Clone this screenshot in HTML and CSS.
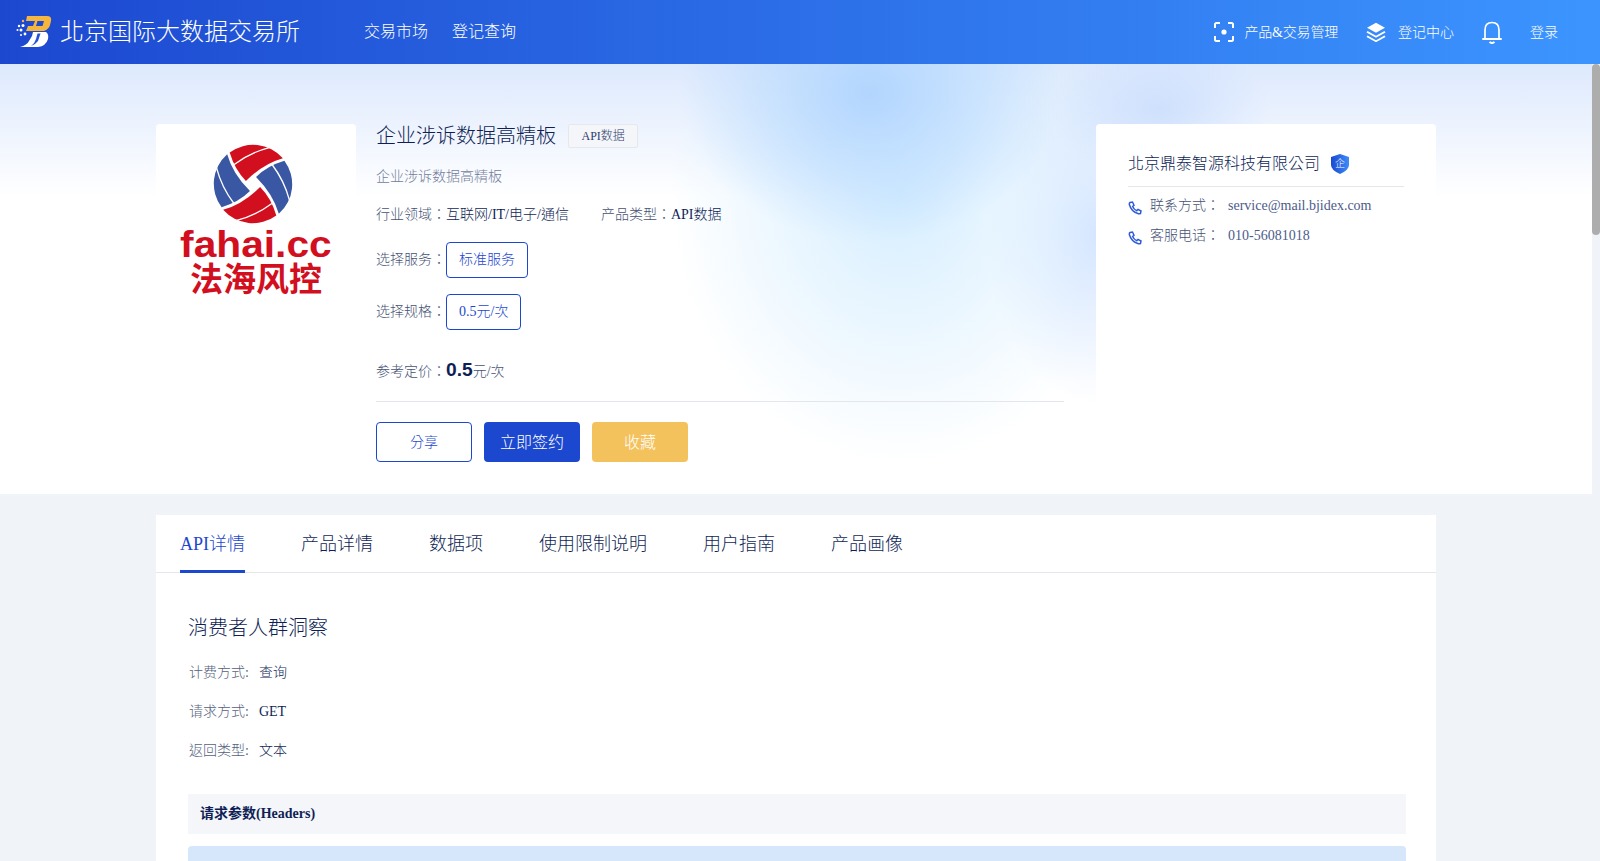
FILE: index.html
```html
<!DOCTYPE html>
<html>
<head>
<meta charset="utf-8">
<title>企业涉诉数据高精板</title>
<link rel="stylesheet" href="styles.css">
</head>
<body>
<header class="topbar">
  <div class="brand">
    <svg class="brand-logo" viewBox="0 0 36 32" width="36" height="32">
      <path fill="#f4b63f" fill-rule="evenodd" d="M11 0H31Q36 0 35 5L34 9Q33 13 28 15H10L12 10H17L19 5H10ZM21.500 5 20 10H26.500L28 5Z"/>
      <path fill="#fff" d="M17 16H30Q33 18 32 23Q30 30 22 31H4Q11 29 13 25L16 20Z"/>
      <path fill="#2352da" d="M21.500 17.500H24.500L22 25Q20 28 15 30Q19 27 20 23Z"/>
      <g fill="#f4b63f"><circle cx="7" cy="5" r="1.200"/></g>
      <g fill="#fff"><circle cx="3" cy="10" r="1.200"/><circle cx="7" cy="9.500" r="1.500"/><circle cx="1.500" cy="14" r="1"/><circle cx="5" cy="14" r="1.500"/><circle cx="9" cy="18" r="1.400"/><circle cx="5" cy="19" r="1"/></g>
    </svg>
    <span class="brand-name">北京国际大数据交易所</span>
  </div>
  <nav class="main-nav">
    <a class="nav-link">交易市场</a>
    <a class="nav-link">登记查询</a>
  </nav>
  <div class="top-actions">
    <a class="top-item item-manage">
      <svg viewBox="0 0 20 20" width="20" height="20" fill="none" stroke="#fff" stroke-width="2"><path d="M1 6V2.500Q1 1 2.500 1H6M14 1H17.500Q19 1 19 2.500V6M19 14V17.500Q19 19 17.500 19H14M6 19H2.500Q1 19 1 17.500V14"/><circle cx="10" cy="10" r="2.600" fill="#fff" stroke="none"/></svg>
      <span class="manage-text">产品&amp;交易管理</span>
    </a>
    <a class="top-item item-reg">
      <svg viewBox="0 0 20 20" width="20" height="20" fill="#fff"><path d="M10 .8 19 5.800 10 10.800 1 5.800Z"/><path d="M1.500 9 10 13.700 18.500 9 19.500 10.500 10 15.800 .5 10.500Z"/><path d="M1.500 13.500 10 18.200 18.500 13.500 19.500 15 10 20.200 .5 15Z"/></svg>
      <span class="top-text">登记中心</span>
    </a>
    <svg class="bell" viewBox="0 0 20 23" width="20" height="23" fill="none" stroke="#fff" stroke-width="1.700"><path d="M3 17.500V9Q3 1.500 10 1.500T17 9V17.500"/><path d="M1 18H19" stroke-linecap="round" stroke-width="2"/><path d="M7.500 21Q10 23 12.500 21" stroke-width="2"/></svg>
    <a class="login">登录</a>
  </div>
</header>

<main class="scroller">
  <div class="page">
    <section class="hero">
      <div class="hero-inner">
        <div class="cover">
          <svg class="ball" viewBox="-39.500 -39.500 79 79" width="80" height="80">
            <defs>
              <path id="blade" d="M-23,-31A39,39 0 0 1 29.500,-25.500Q10,-20 -7,-3Q-18,-14 -23,-31Z"/>
              <path id="seam" d="M-19,-19Q-3,-31 16,-36" fill="none" stroke="#fff" stroke-width="1.300"/>
            </defs>
            <use href="#blade" fill="#d20f1e"/><use href="#seam"/>
            <g transform="rotate(90)"><use href="#blade" fill="#3a57a4"/><use href="#seam"/></g>
            <g transform="rotate(180)"><use href="#blade" fill="#d20f1e"/><use href="#seam"/></g>
            <g transform="rotate(270)"><use href="#blade" fill="#3a57a4"/><use href="#seam"/></g>
          </svg>
          <div class="cover-en">fahai.cc</div>
          <div class="cover-cn">法海风控</div>
        </div>

        <div class="info">
          <div class="title-row">
            <h1 class="title">企业涉诉数据高精板</h1>
            <span class="tag">API数据</span>
          </div>
          <p class="desc">企业涉诉数据高精板</p>
          <div class="meta">
            <span class="meta-item"><span class="label">行业领域：</span><span class="value">互联网/IT/电子/通信</span></span>
            <span class="meta-item"><span class="label">产品类型：</span><span class="value">API数据</span></span>
          </div>
          <div class="choice"><span class="label">选择服务：</span><span class="chip">标准服务</span></div>
          <div class="choice"><span class="label">选择规格：</span><span class="chip">0.5元/次</span></div>
          <div class="price"><span class="label">参考定价：</span><strong class="amount">0.5</strong><span class="label">元/次</span></div>
          <div class="actions">
            <button class="btn btn-line">分享</button>
            <button class="btn btn-primary">立即签约</button>
            <button class="btn btn-gold">收藏</button>
          </div>
        </div>

        <aside class="seller">
          <div class="seller-head">
            <span class="seller-name">北京鼎泰智源科技有限公司</span>
            <span class="shield">
              <svg viewBox="0 0 18 20" width="18" height="20"><defs><linearGradient id="sg" x1="0" y1="0" x2="1" y2="0"><stop offset="0" stop-color="#1c48d0"/><stop offset="1" stop-color="#3c8cf8"/></linearGradient></defs><path fill="url(#sg)" d="M9 0 18 3V11Q18 16 9 20 0 16 0 11V3Z"/></svg>
              <span class="shield-text">企</span>
            </span>
          </div>
          <div class="contact">
            <svg viewBox="0 0 14 14" width="14" height="14" fill="none" stroke="#2f5bd8" stroke-width="1.500"><path d="M2 1.500 4.500 1 6 4.200 4.600 5.500Q5.800 8.400 8.800 9.700L10 8.400 13 10 12.500 12.400Q12 13 10.500 12.800 3.500 11 1.300 3.500 1.200 2 2 1.500Z"/></svg>
            <span class="contact-label">联系方式：</span><span class="contact-value">service@mail.bjidex.com</span>
          </div>
          <div class="contact">
            <svg viewBox="0 0 14 14" width="14" height="14" fill="none" stroke="#2f5bd8" stroke-width="1.500"><path d="M2 1.500 4.500 1 6 4.200 4.600 5.500Q5.800 8.400 8.800 9.700L10 8.400 13 10 12.500 12.400Q12 13 10.500 12.800 3.500 11 1.300 3.500 1.200 2 2 1.500Z"/></svg>
            <span class="contact-label">客服电话：</span><span class="contact-value">010-56081018</span>
          </div>
        </aside>
      </div>
    </section>

    <section class="detail">
      <div class="tabs">
        <a class="tab tab-active">API详情</a>
        <a class="tab">产品详情</a>
        <a class="tab">数据项</a>
        <a class="tab">使用限制说明</a>
        <a class="tab">用户指南</a>
        <a class="tab">产品画像</a>
      </div>
      <div class="detail-body">
        <h2 class="api-name">消费者人群洞察</h2>
        <div class="api-row"><span class="api-label">计费方式:</span><span class="api-value">查询</span></div>
        <div class="api-row"><span class="api-label">请求方式:</span><span class="api-value">GET</span></div>
        <div class="api-row"><span class="api-label">返回类型:</span><span class="api-value">文本</span></div>
        <div class="band">请求参数(Headers)</div>
        <div class="table-head"></div>
      </div>
    </section>
  </div>
  <div class="rail"><div class="thumb"></div></div>
</main>
</body>
</html>
```
FILE: styles.css
```css
* { box-sizing: border-box; }
html, body { margin: 0; height: 100%; overflow: hidden; }
body {
  font-family: "Liberation Serif", "Noto Sans CJK TC", serif;
  font-size: 14px;
  font-weight: 300;
  line-height: 20px;
  color: #0f1f55;
  background: #f0f3f8;
}
a { color: inherit; text-decoration: none; }
h1, h2, p { margin: 0; font-weight: 300; }

.topbar {
  height: 64px;
  display: flex;
  align-items: center;
  color: #fff;
  background: linear-gradient(90deg, #1c48d0 0%, #3c95ff 100%);
}
.brand { display: flex; align-items: center; margin-left: 16px; }
.brand-logo { margin-right: 8px; }
.brand-name { font-size: 24px; line-height: 32px; }
.main-nav { display: flex; gap: 24px; margin-left: 64px; font-size: 16px; }
.top-actions { display: flex; align-items: center; margin-left: auto; }
.top-item { display: flex; align-items: center; }
.item-manage { gap: 11px; margin-right: 28px; }
.item-reg { gap: 12px; margin-right: 28px; }
.manage-text { letter-spacing: -.2px; padding-top: 1px; }
.top-text { padding-top: 1px; }
.bell { display: block; margin-right: 28px; }
.login { margin-right: 42px; padding-top: 1px; }

.scroller { height: 797px; display: flex; overflow: hidden; }
.page { flex: 1; min-width: 0; }
.rail { width: 8px; flex: none; background: #f0f3f8; }
.thumb { height: 171px; background: #adadad; border-radius: 4px; }

.hero {
  height: 430px;
  padding-top: 60px;
  background:
    radial-gradient(ellipse 190px 150px at 870px 29px, rgba(176, 212, 254, .95), rgba(176, 212, 254, 0) 100%),
    radial-gradient(ellipse 230px 270px at 900px 130px, rgba(214, 238, 255, 1), rgba(214, 238, 255, 0) 100%),
    radial-gradient(ellipse 110px 170px at 1096px 170px, rgba(205, 224, 255, .85), rgba(205, 224, 255, 0) 100%),
    radial-gradient(ellipse 110px 70px at 1160px 45px, rgba(200, 220, 253, .8), rgba(200, 220, 253, 0) 100%),
    linear-gradient(180deg, #dde9fd 0%, #ffffff 31%);
}
.hero-inner { width: 1280px; margin: 0 auto; display: flex; align-items: flex-start; }

.cover {
  width: 200px;
  height: 200px;
  flex: none;
  background: #fff;
  border-radius: 4px;
  display: flex;
  flex-direction: column;
  align-items: center;
  padding-top: 20px;
  color: #d20f1e;
}
.ball { display: block; margin-right: 6px; }
.cover-en {
  font-family: "Liberation Sans", sans-serif;
  font-weight: 700;
  font-size: 37px;
  line-height: 30px;
  margin-top: 6px;
  transform: scaleX(1.1);
}
.cover-cn {
  font-family: "Noto Sans CJK SC", sans-serif;
  font-weight: 700;
  font-size: 33px;
  line-height: 34px;
}

.info { width: 688px; margin-left: 20px; flex: none; }
.title-row { display: flex; align-items: center; height: 24px; }
.title { font-size: 20px; line-height: 24px; }
.tag {
  margin-left: 12px;
  height: 24px;
  padding: 0 12.500px;
  font-size: 12px;
  line-height: 22px;
  color: #2c3c70;
  background: #f5f6f9;
  border: 1px solid #e6e8ee;
  border-radius: 2px;
}
.desc { margin-top: 19px; color: #737d9c; }
.meta { display: flex; gap: 32px; margin-top: 18px; }
.label { color: #465274; }
.value { color: #0f1f55; }
.choice { display: flex; align-items: center; margin-top: 17px; height: 36px; }
.choice + .choice { margin-top: 16px; }
.chip {
  height: 36px;
  padding: 0 12px;
  line-height: 34px;
  color: #1c48d0;
  border: 1px solid #1c48d0;
  border-radius: 4px;
}
.price {
  display: flex;
  align-items: baseline;
  height: 72px;
  padding: 25px 0 0;
  line-height: 30px;
  border-bottom: 1px solid #e4e6ec;
}
.amount {
  font-family: "Liberation Sans", sans-serif;
  font-size: 19.200px;
  font-weight: 700;
  color: #0f1f55;
}
.actions { display: flex; gap: 12px; margin-top: 20px; }
.btn {
  width: 96px;
  height: 40px;
  border-radius: 4px;
  font-family: inherit;
  font-weight: 300;
  padding: 0 0 2px;
  border: 1px solid transparent;
  color: #fff;
  font-size: 16px;
}
.btn-line { background: #fff; border-color: #1c48d0; color: #1c48d0; font-size: 14px; }
.btn-primary { background: #1c48d0; }
.btn-gold { background: #f4c25c; }

.seller {
  width: 340px;
  height: 300px;
  margin-left: 32px;
  flex: none;
  padding: 27px 32px 0;
  background: #fff;
  border-radius: 4px 4px 0 0;
}
.seller-head {
  display: flex;
  align-items: center;
  height: 36px;
  border-bottom: 1px solid #e4e6ec;
  padding-bottom: 9px;
  margin-bottom: 4px;
}
.seller-name { font-size: 16px; line-height: 24px; color: #0f1f55; }
.shield { position: relative; width: 18px; height: 20px; margin-left: 11px; }
.shield svg { display: block; }
.shield-text {
  position: absolute;
  inset: 0;
  text-align: center;
  font-size: 10px;
  line-height: 20px;
  color: #fff;
}
.contact { display: flex; align-items: center; height: 30px; }
.contact svg { margin: 3px 8px 0 0; flex: none; }
.contact-label { width: 78px; color: #465274; }
.contact-value { color: #4c5b8c; }

.detail { width: 1280px; margin: 21px auto 0; background: #fff; }
.tabs {
  display: flex;
  gap: 56px;
  height: 58px;
  padding: 0 24px;
  border-bottom: 1px solid #e4e6ec;
}
.tab { font-size: 18px; line-height: 58px; height: 58px; color: #0f1f55; }
.tab-active { color: #1c48d0; border-bottom: 3px solid #1c48d0; }
.detail-body { padding: 41px 30px 0 32px; }
.api-name { font-size: 20px; line-height: 28px; }
.api-row { height: 39px; line-height: 39px; margin-left: 1px; }
.api-row:first-of-type { margin-top: 11px; }
.api-label { color: #565f80; margin-right: 10px; }
.api-value { color: #0f1f55; }
.band {
  margin-top: 24px;
  height: 40px;
  padding-left: 12px;
  line-height: 40px;
  font-weight: 700;
  background: #f4f6fa;
}
.table-head { height: 40px; margin-top: 12px; background: #d6e6fb; border-radius: 4px 4px 0 0; }
```
